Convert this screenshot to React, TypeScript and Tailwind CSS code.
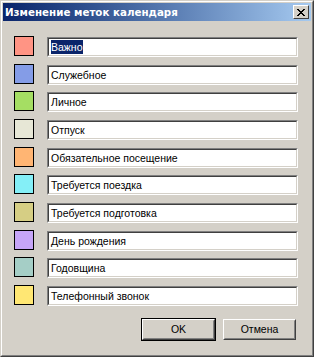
const LABELS = [
  { color: "#ff9484", name: "Важно" },
  { color: "#849ce7", name: "Служебное" },
  { color: "#a5de63", name: "Личное" },
  { color: "#e7e7d6", name: "Отпуск" },
  { color: "#ffb573", name: "Обязательное посещение" },
  { color: "#84eff7", name: "Требуется поездка" },
  { color: "#d6ce84", name: "Требуется подготовка" },
  { color: "#c6a5f7", name: "День рождения" },
  { color: "#a5cec6", name: "Годовщина" },
  { color: "#ffe773", name: "Телефонный звонок" },
];

function Button({ label, isDefault }: { label: string; isDefault?: boolean }) {
  return (
    <div className={isDefault ? "border border-black" : "border border-transparent"}>
      <div className="border border-t-white border-l-white border-b-[#404040] border-r-[#404040]">
        <div className="flex h-[19px] w-[71px] items-center justify-center border border-t-[#d4d0c8] border-l-[#d4d0c8] border-b-[#808080] border-r-[#808080] text-[10.5px] text-black">
          {label}
        </div>
      </div>
    </div>
  );
}

export default function App() {
  return (
    <div
      className="h-[357px] w-[314px] border border-t-[#d4d0c8] border-l-[#d4d0c8] border-b-[#404040] border-r-[#404040] bg-[#d4d0c8]"
      style={{ fontFamily: "'Liberation Sans', Arial, sans-serif" }}
    >
      <div className="flex h-full flex-col border border-t-white border-l-white border-b-[#808080] border-r-[#808080] p-px">
        {/* title bar */}
        <div className="flex h-[18px] items-center justify-between bg-gradient-to-r from-[#0a246a] to-[#a6caf0] pl-[2px] pr-[2px]">
          <span
            className="text-[10.3px] font-bold leading-none text-white"
            style={{ fontFamily: "'DejaVu Sans', sans-serif" }}
          >
            Изменение меток календаря
          </span>
          <div className="flex h-[14px] w-[16px] items-center justify-center border border-t-white border-l-white border-b-[#404040] border-r-[#404040] bg-[#d4d0c8]">
            <svg width="8" height="7" viewBox="0 0 8 7" shapeRendering="crispEdges">
              <path d="M0 0h2v1H0zM6 0h2v1H6zM1 1h2v1H1zM5 1h2v1H5zM2 2h4v1H2zM3 3h2v1H3zM2 4h4v1H2zM1 5h2v1H1zM5 5h2v1H5zM0 6h2v1H0zM6 6h2v1H6z" fill="#000" />
            </svg>
          </div>
        </div>

        <div className="flex flex-1 flex-col pl-[11px] pr-[13px] pt-[15px]">
          <div className="flex flex-col gap-[7.67px]">
            {LABELS.map((l, i) => (
              <div key={l.name} className="flex h-[20px] items-start gap-[13px]">
                <div className="h-[20px] w-[20px] border border-black" style={{ background: l.color }} />
                <div className="mt-px flex-1 border border-t-[#808080] border-l-[#808080] border-b-white border-r-white">
                  <div className="flex h-[18px] items-center border border-t-[#404040] border-l-[#404040] border-b-[#d4d0c8] border-r-[#d4d0c8] bg-white pl-[2px] text-[10.5px] text-black">
                    {i === 0 ? (
                      <span className="bg-[#0a246a] leading-[14px] text-white">{l.name}</span>
                    ) : (
                      <span className="leading-[14px]">{l.name}</span>
                    )}
                  </div>
                </div>
              </div>
            ))}
          </div>

          <div className="mr-px mt-[13px] flex justify-end gap-[6px]">
            <Button label="OK" isDefault />
            <Button label="Отмена" />
          </div>
        </div>
      </div>
    </div>
  );
}
